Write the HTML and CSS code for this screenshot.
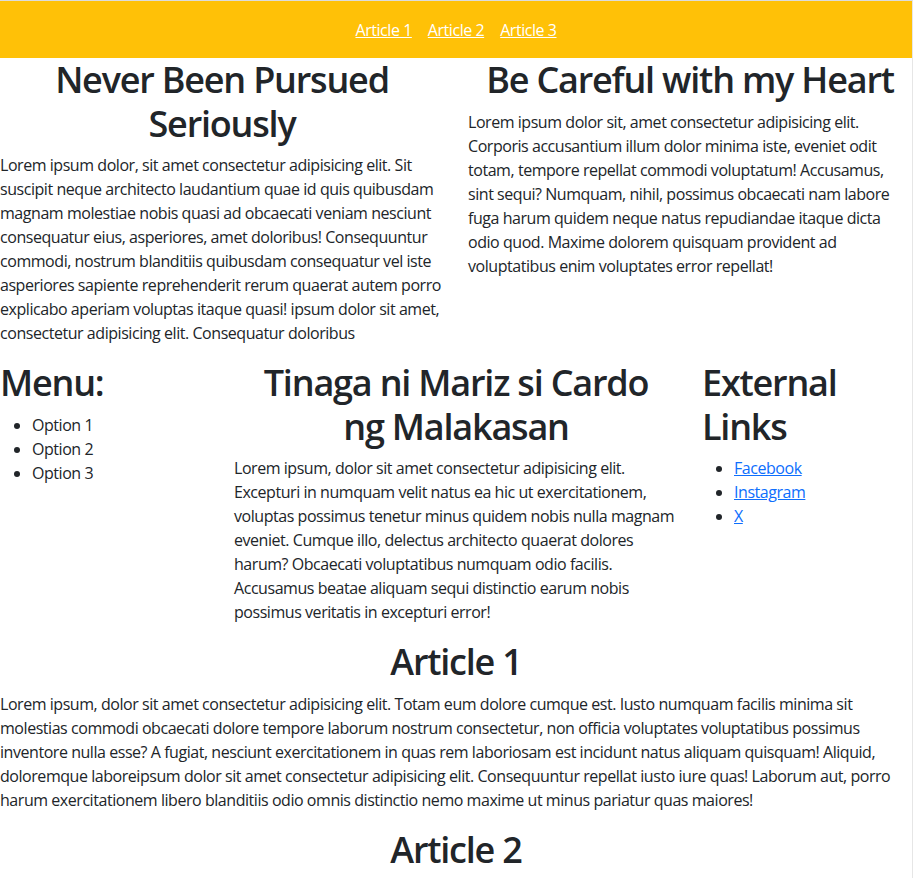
FILE: index.html
```html
<!DOCTYPE html>
<html lang="en">
<head>
<meta charset="utf-8">
<title>Articles</title>
<link rel="stylesheet" href="styles.css">
</head>
<body>
<header class="topbar">
  <nav class="nav">
    <a href="#a1">Article 1</a>
    <a href="#a2">Article 2</a>
    <a href="#a3">Article 3</a>
  </nav>
</header>
<main class="page">
  <div class="row">
    <section class="col col-6">
      <h1 class="title center">Never Been Pursued Seriously</h1>
      <p>Lorem ipsum dolor, sit amet consectetur adipisicing elit. Sit suscipit neque architecto laudantium quae id quis quibusdam magnam molestiae nobis quasi ad obcaecati veniam nesciunt consequatur eius, asperiores, amet doloribus! Consequuntur commodi, nostrum blanditiis quibusdam consequatur vel iste asperiores sapiente reprehenderit rerum quaerat autem porro explicabo aperiam voluptas itaque quasi! ipsum dolor sit amet, consectetur adipisicing elit. Consequatur doloribus</p>
    </section>
    <section class="col col-6">
      <h1 class="title center">Be Careful with my Heart</h1>
      <p>Lorem ipsum dolor sit, amet consectetur adipisicing elit. Corporis accusantium illum dolor minima iste, eveniet odit totam, tempore repellat commodi voluptatum! Accusamus, sint sequi? Numquam, nihil, possimus obcaecati nam labore fuga harum quidem neque natus repudiandae itaque dicta odio quod. Maxime dolorem quisquam provident ad voluptatibus enim voluptates error repellat!</p>
    </section>
  </div>
  <div class="row">
    <aside class="col col-3">
      <h1 class="title">Menu:</h1>
      <ul class="list">
        <li>Option 1</li>
        <li>Option 2</li>
        <li>Option 3</li>
      </ul>
    </aside>
    <section class="col col-6">
      <h1 class="title center">Tinaga ni Mariz si Cardo <span class="nowrap">ng Malakasan</span></h1>
      <p>Lorem ipsum, dolor sit amet consectetur adipisicing elit. Excepturi in numquam velit natus ea hic ut exercitationem, voluptas possimus tenetur minus quidem nobis nulla magnam eveniet. Cumque illo, delectus architecto quaerat dolores harum? Obcaecati voluptatibus numquam odio facilis. Accusamus beatae aliquam sequi distinctio earum nobis possimus veritatis in excepturi error!</p>
    </section>
    <aside class="col col-3">
      <h1 class="title">External Links</h1>
      <ul class="list">
        <li><a href="#">Facebook</a></li>
        <li><a href="#">Instagram</a></li>
        <li><a href="#">X</a></li>
      </ul>
    </aside>
  </div>
  <article id="a1" class="article">
    <h1 class="title center">Article 1</h1>
    <p>Lorem ipsum, dolor sit amet consectetur adipisicing elit. Totam eum dolore cumque est. Iusto numquam facilis minima sit molestias commodi obcaecati dolore tempore laborum nostrum consectetur, non officia voluptates voluptatibus possimus inventore nulla esse? A fugiat, nesciunt exercitationem in quas rem laboriosam est incidunt natus aliquam quisquam! Aliquid, doloremque laboreipsum dolor sit amet consectetur adipisicing elit. Consequuntur repellat iusto iure quas! Laborum aut, porro harum exercitationem libero blanditiis odio omnis distinctio nemo maxime ut minus pariatur quas maiores!</p>
  </article>
  <article id="a2" class="article">
    <h1 class="title center">Article 2</h1>
    <p>Lorem ipsum dolor sit amet consectetur adipisicing elit. Dolorum, quibusdam.</p>
  </article>
</main>
</body>
</html>
```

FILE: styles.css
```css
* { box-sizing: border-box; }
html, body { margin: 0; padding: 0; }
body {
  font-family: "Open Sans", "Noto Sans", sans-serif;
  font-size: 16px;
  line-height: 1.5;
  color: #212529;
  background: #fff;
  border-top: 1px solid #dcdcdc;
  border-right: 1px solid #e6e6e6;
  letter-spacing: -0.45px;
  overflow-x: hidden;
}
.topbar {
  background: #ffc107;
  padding: 17px 16px 16px;
}
.nav {
  display: flex;
  justify-content: center;
  gap: 16px;
}
.nav a { color: #fff; }
.page { overflow: hidden; }
.row {
  display: flex;
  margin: 0 -12px;
}
.col { padding: 0 12px; }
.col-6 { flex: 0 0 50%; max-width: 50%; }
.col-3 { flex: 0 0 25%; max-width: 25%; }
.title {
  margin: 0 0 8px;
  font-size: 36px;
  font-weight: 600;
  line-height: 43.5px;
  letter-spacing: -1.2px;
}
.nowrap { white-space: nowrap; }
.center { text-align: center; }
p { margin: 0 0 16px; }
.list {
  margin: 0 0 16px;
  padding-left: 32px;
}
a { color: #0d6efd; }
```
